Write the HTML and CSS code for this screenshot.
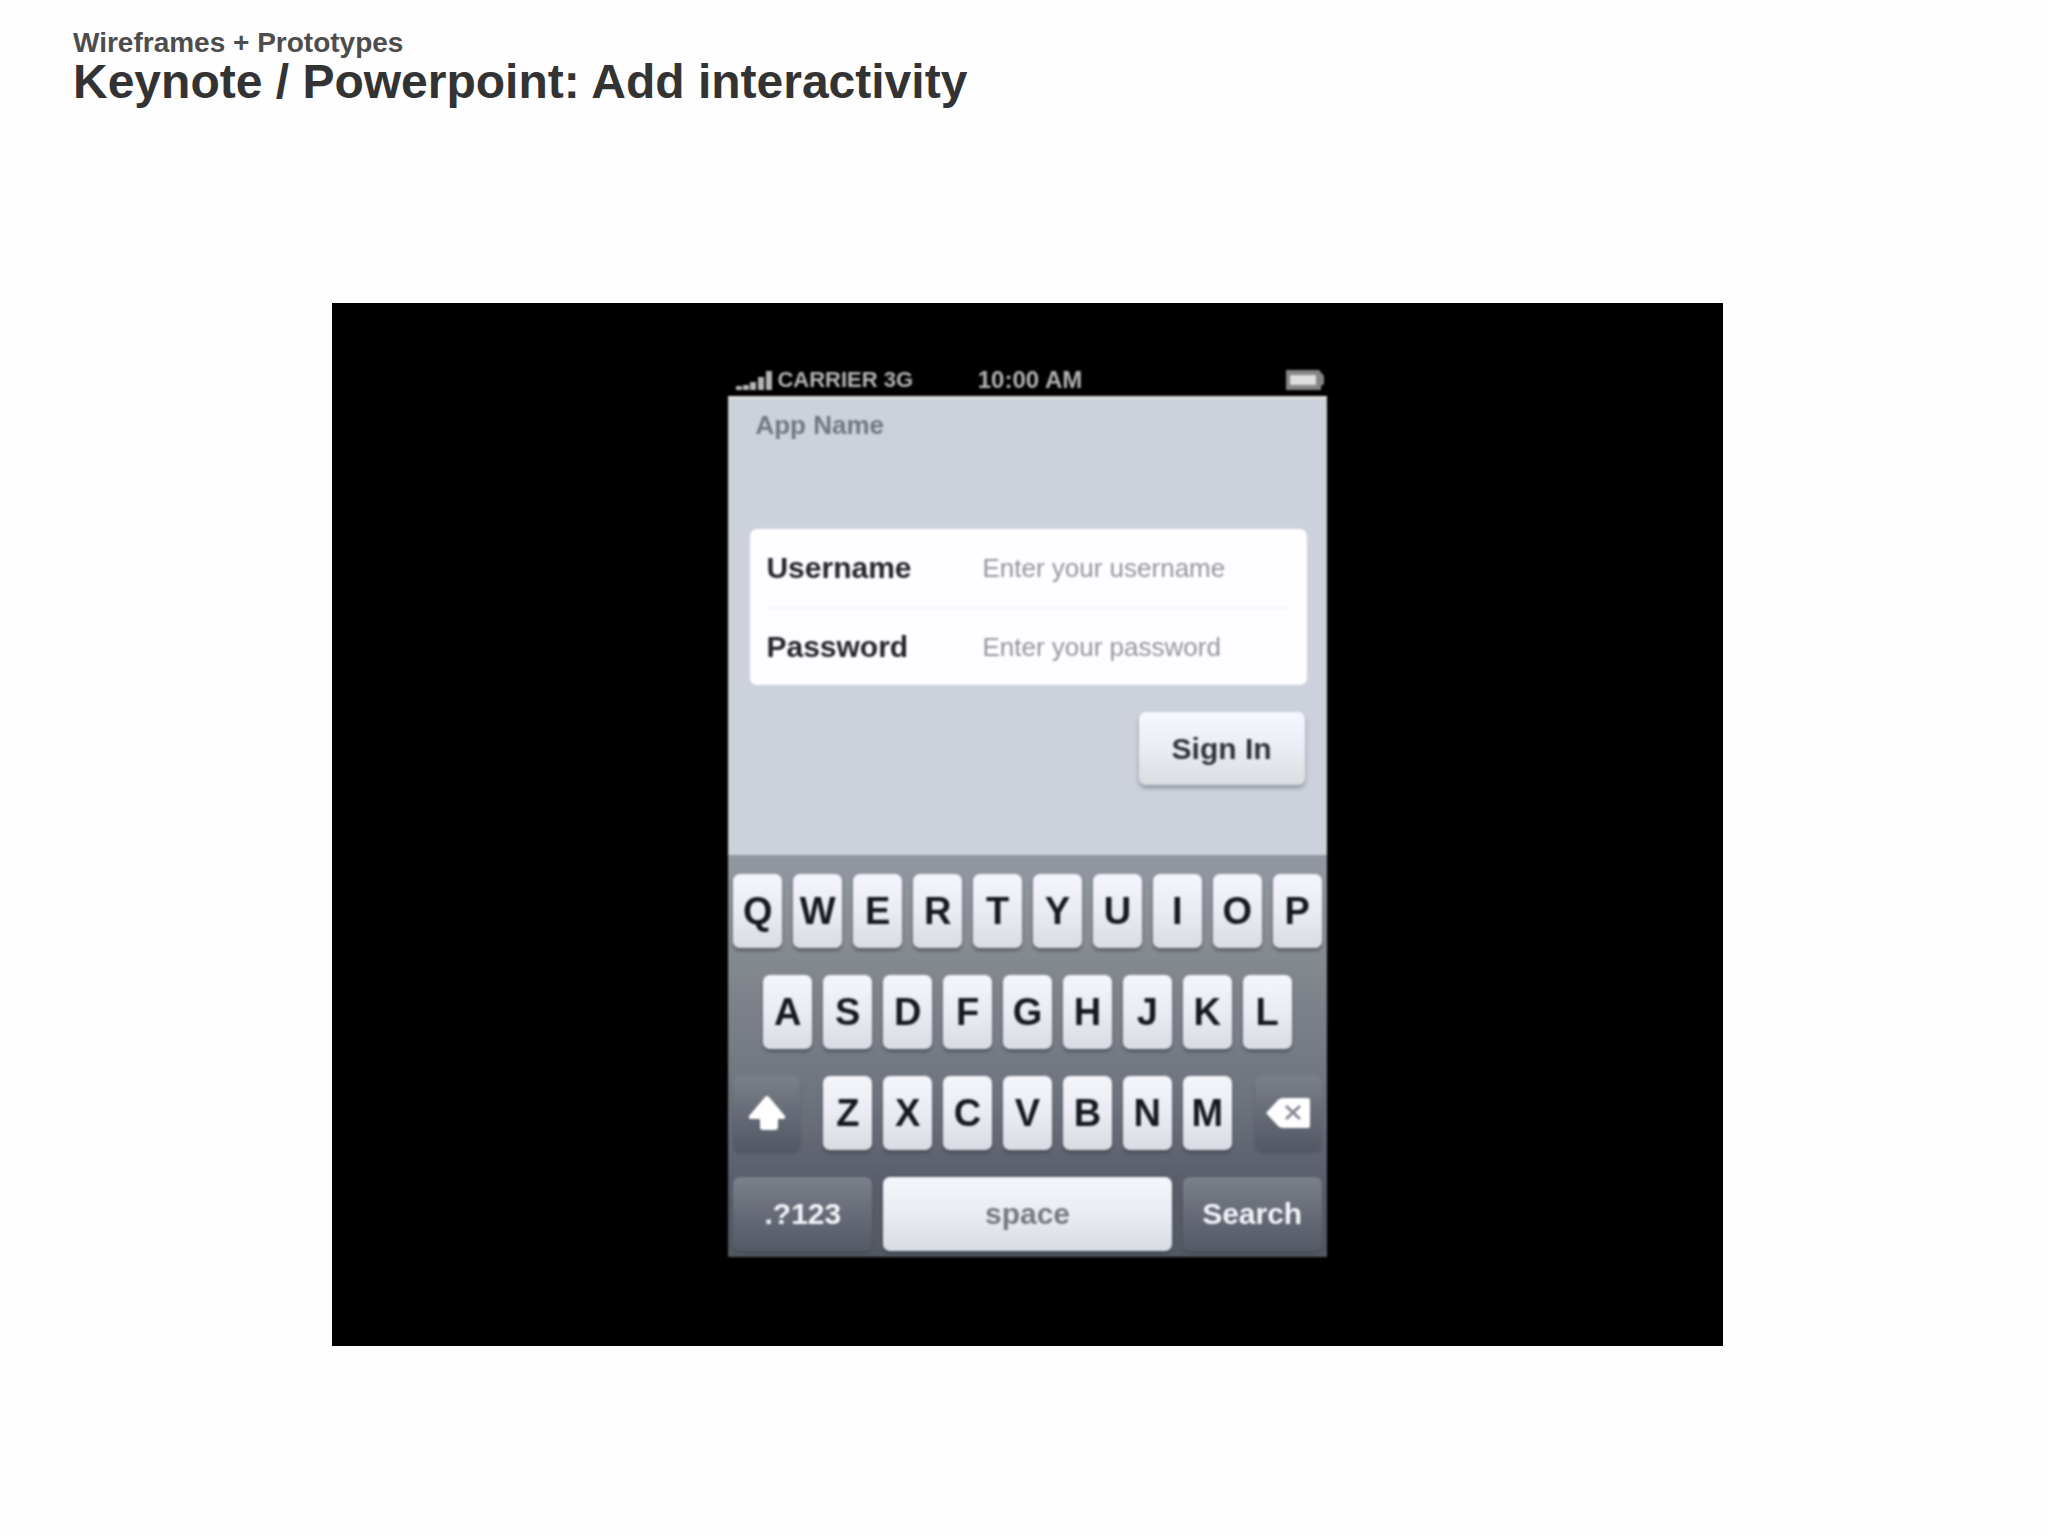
FILE: index.html
```html
<!DOCTYPE html>
<html lang="en">
<head>
    <meta charset="UTF-8">
    <meta name="viewport" content="width=device-width, initial-scale=1.0">
    <title>Keynote / Powerpoint: Add interactivity</title>
    <link rel="stylesheet" href="styles.css">
</head>
<body>

    <header>
        <p>Wireframes + Prototypes</p>
        <h1>Keynote / Powerpoint: Add interactivity</h1>
    </header>

    <main>
        <div class="stage">
            <div class="phone">

                <div class="status-bar">
                    <div class="carrier">
                        <svg width="38" height="22" viewBox="0 0 38 22" fill="#b4b4b4" aria-hidden="true">
                            <rect x="1" y="17" width="6" height="4"/>
                            <rect x="8" y="16" width="6" height="5"/>
                            <rect x="15" y="13" width="6" height="8"/>
                            <rect x="23" y="8" width="6" height="13"/>
                            <rect x="31" y="2" width="6" height="19"/>
                        </svg>
                        <span>CARRIER 3G</span>
                    </div>
                    <span class="time">10:00 AM</span>
                    <svg class="battery" width="40" height="22" viewBox="0 0 40 22" aria-hidden="true">
                        <path d="M1 1H34L39 7V15L36 17V21H1Z" fill="#858585"/>
                        <rect x="5" y="6" width="26" height="10" fill="#dedede"/>
                    </svg>
                </div>

                <form class="login">
                    <h2>App Name</h2>
                    <div class="fields">
                        <div class="field">
                            <label for="username">Username</label>
                            <input type="text" id="username" placeholder="Enter your username">
                        </div>
                        <div class="field">
                            <label for="password">Password</label>
                            <input type="password" id="password" placeholder="Enter your password">
                        </div>
                    </div>
                    <button type="button" class="sign-in">Sign In</button>
                </form>

                <div class="keyboard">
                    <div class="row">
                        <button class="key">Q</button>
                        <button class="key">W</button>
                        <button class="key">E</button>
                        <button class="key">R</button>
                        <button class="key">T</button>
                        <button class="key">Y</button>
                        <button class="key">U</button>
                        <button class="key">I</button>
                        <button class="key">O</button>
                        <button class="key">P</button>
                    </div>
                    <div class="row">
                        <button class="key second-row">A</button>
                        <button class="key">S</button>
                        <button class="key">D</button>
                        <button class="key">F</button>
                        <button class="key">G</button>
                        <button class="key">H</button>
                        <button class="key">J</button>
                        <button class="key">K</button>
                        <button class="key">L</button>
                    </div>
                    <div class="row">
                        <button class="key dark shift" aria-label="Shift">
                            <svg width="38" height="36" viewBox="0 0 38 36" aria-hidden="true">
                                <path d="M17 2Q19 0 21 2L37 21Q38 24 35 24H30V32Q30 35 27 35H15Q12 35 12 32V24H3Q0 24 1 21Z" fill="#fff"/>
                            </svg>
                        </button>
                        <button class="key">Z</button>
                        <button class="key">X</button>
                        <button class="key">C</button>
                        <button class="key">V</button>
                        <button class="key">B</button>
                        <button class="key">N</button>
                        <button class="key">M</button>
                        <button class="key dark delete" aria-label="Delete">
                            <svg width="46" height="32" viewBox="0 0 46 32" aria-hidden="true">
                                <path d="M1 16L13 3Q15 1 18 1H43Q45 1 45 3V29Q45 31 43 31H18Q15 31 13 29Z" fill="#fff"/>
                                <path d="M21 9L35 22M35 9L21 22" stroke="#858991" stroke-width="3" fill="none"/>
                            </svg>
                        </button>
                    </div>
                    <div class="row">
                        <button class="key dark wide">.?123</button>
                        <button class="key space">space</button>
                        <button class="key dark wide">Search</button>
                    </div>
                </div>

            </div>
        </div>
    </main>

</body>
</html>
```

FILE: styles.css
```css
* {
    box-sizing: border-box;
}
body {
    font-family: "Liberation Sans", Arial, sans-serif;
    background-color: #fefefe;
    color: #333;
    margin: 0;
    padding: 0;
}
header {
    padding: 27px 73px 0;
    font-weight: bold;
}
header p {
    margin: 0;
    font-size: 28px;
    line-height: 32px;
    color: #4d4d4d;
}
header h1 {
    margin: 0;
    font-size: 48px;
    line-height: 45px;
}
main {
    padding: 199px 325px 80px 332px;
}
.stage {
    background-color: #000;
    aspect-ratio: 4 / 3;
    padding-top: 61px;
}
.phone {
    width: 43%;
    margin: 0 auto;
    filter: blur(1px);
}

/* Status bar */
.status-bar {
    display: grid;
    grid-template-columns: 1fr auto 1fr;
    align-items: center;
    height: 32px;
    padding: 0 2px 0 7px;
    color: #b4b4b4;
    font-size: 24px;
    font-weight: bold;
}
.carrier {
    display: flex;
    align-items: center;
    gap: 4px;
    font-size: 22px;
}
.battery {
    justify-self: end;
}

/* Login form */
.login {
    display: flex;
    flex-direction: column;
    height: 459px;
    padding: 12px 20px 0;
    background-color: #ccd1dc;
    border: 2px solid #ccd1d1;
    border-top: 3px solid #dcdfdc;
    border-bottom: none;
}
.login h2 {
    margin: 0 5px 90px;
    font-size: 26px;
    line-height: 28px;
    color: #73777f;
}
.fields {
    margin: 0 -2px 27px 0;
    padding: 0 16px;
    background-color: #fefdff;
    border-radius: 7px;
}
.field {
    display: flex;
    align-items: center;
    height: 78px;
}
.field + .field {
    border-top: 2px solid #f7f4f9;
}
.field label {
    width: 216px;
    font-size: 30px;
    font-weight: bold;
    color: #24262c;
}
.field input {
    flex: 1;
    min-width: 0;
    padding: 0;
    border: none;
    background: none;
    font-family: inherit;
    font-size: 26px;
}
.field input::placeholder {
    color: #94959f;
    opacity: 1;
}
.sign-in {
    align-self: flex-end;
    width: 166px;
    height: 73px;
    border: none;
    border-radius: 7px;
    background: linear-gradient(#f5f8fe, #ebedf4 50%, #d9dce1);
    box-shadow: 0 3px 4px #8d929b;
    font-family: inherit;
    font-size: 30px;
    font-weight: bold;
    color: #2e323a;
}

/* Keyboard */
.keyboard {
    display: flex;
    flex-direction: column;
    gap: 27px;
    padding: 19px 5px 6px;
    background: linear-gradient(#9298a2, #858990 25%, #6e747e 60%, #5b5e6b 80%, #525961);
}
.row {
    display: grid;
    grid-template-columns: repeat(20, 1fr);
    column-gap: 11px;
}
.key {
    grid-column: span 2;
    display: flex;
    align-items: center;
    justify-content: center;
    height: 74px;
    padding: 0;
    border: none;
    border-radius: 7px;
    background: linear-gradient(#f5f6fc, #ebecf3 50%, #dadce3);
    box-shadow: 0 3px 3px rgba(50, 54, 64, 0.5);
    font-family: inherit;
    font-size: 38px;
    font-weight: bold;
    color: #17191f;
}
.second-row {
    grid-column: 2 / span 2;
}
.dark {
    background: linear-gradient(#7b808a, #666b77 50%, #535a65);
    box-shadow: 0 3px 3px rgba(50, 54, 64, 0.3);
    font-size: 30px;
    color: #f4f5fa;
}
.shift {
    grid-column: span 3;
    margin-right: 12px;
}
.delete {
    grid-column: 18 / span 3;
    margin-left: 12px;
}
.wide {
    grid-column: span 5;
}
.space {
    grid-column: span 10;
    font-size: 30px;
    color: #777980;
}
```
